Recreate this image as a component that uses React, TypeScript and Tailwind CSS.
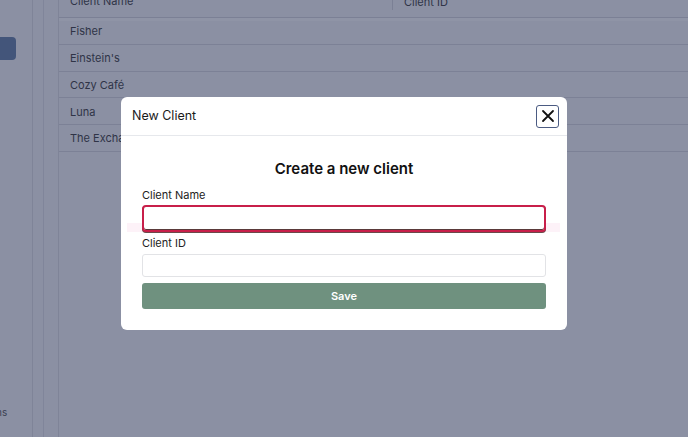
import React from "react";

const rows = ["Fisher", "Einstein's", "Cozy Café", "Luna", "The Exchange"];

export default function App() {
  return (
    <div className="relative w-[688px] h-[437px] overflow-hidden bg-[#8b90a3]" style={{ fontFamily: "Inter, 'Noto Sans', sans-serif" }}>
      {/* background page */}
      <div className="flex h-full">
        <div className="relative w-[33px] h-full border-r border-[#7f8498]">
          <div className="absolute left-0 top-[37px] w-[16px] h-[23px] rounded-r-[4px] bg-[#43557a]" />
          <div className="absolute left-0 top-[405px] text-[10px] text-[#3a3f52] -translate-x-[4px]">ns</div>
        </div>
        <div className="w-[11px] h-full border-r border-[#80859a]" />
        <div className="w-[15px] h-full border-r border-[#7f8498]" />
        <div className="flex-1 flex flex-col -mt-[8px]">
          <div className="flex h-[26px] items-center border-b border-[#7b8095] shadow-[0_3px_0_#8f94a6] text-[11px] text-[#2f3447]">
            <div className="w-[333px] pl-[11px] -translate-y-[3px]">Client Name</div>
            <div className="h-[16px] border-l border-[#7b8095] pl-[11px] -translate-y-[3px]">Client ID</div>
          </div>
          {rows.map((r) => (
            <div key={r} className="h-[26.8px] flex items-center pl-[11px] pt-[1px] border-b border-[#7c8196] text-[11px] text-[#2f3447]">
              {r}
            </div>
          ))}
        </div>
      </div>

      {/* modal */}
      <div className="absolute left-[121px] top-[97px] w-[446px] h-[233px] bg-white rounded-[6px] flex flex-col">
        <div className="h-[39px] flex items-center justify-between pl-[11px] pr-[8px] border-b border-[#e6e8ec]">
          <span className="text-[12.5px] text-[#1a1a1a]">New Client</span>
          <button className="w-[23px] h-[23px] rounded-[3px] border-[1.5px] border-[#4b5b82] flex items-center justify-center">
            <svg width="14" height="14" viewBox="0 0 14 14" fill="none" stroke="#111" strokeWidth="1.8" strokeLinecap="round">
              <path d="M2 2 L12 12 M12 2 L2 12" />
            </svg>
          </button>
        </div>
        <div className="flex flex-col px-[21px] pt-[23px]">
          <div className="text-center text-[15px] font-semibold text-[#111] leading-[20px]">Create a new client</div>
          <label className="mt-[9px] text-[11px] leading-[14px] text-[#222]">Client Name</label>
          <div className="relative mt-[3px]">
            <div className="absolute left-[-15px] right-[-14px] top-[18px] h-[9px] bg-[#fdf2f8]" />
            <input className="relative block w-full h-[27px] rounded-[4px] border-2 border-[#c81f4a] shadow-[inset_0_-1px_0_#5a3a3a,0_1px_0_#6b4a4a] outline-none bg-white" />
          </div>
          <label className="mt-[4px] text-[11px] leading-[14px] text-[#222]">Client ID</label>
          <input className="mt-[4px] block w-full h-[23px] rounded-[3px] border border-[#e2e3e6] outline-none bg-white" />
          <button className="mt-[6px] h-[26px] w-full rounded-[3px] bg-[#6f917f] text-white text-[11px] font-semibold">Save</button>
        </div>
      </div>
    </div>
  );
}
